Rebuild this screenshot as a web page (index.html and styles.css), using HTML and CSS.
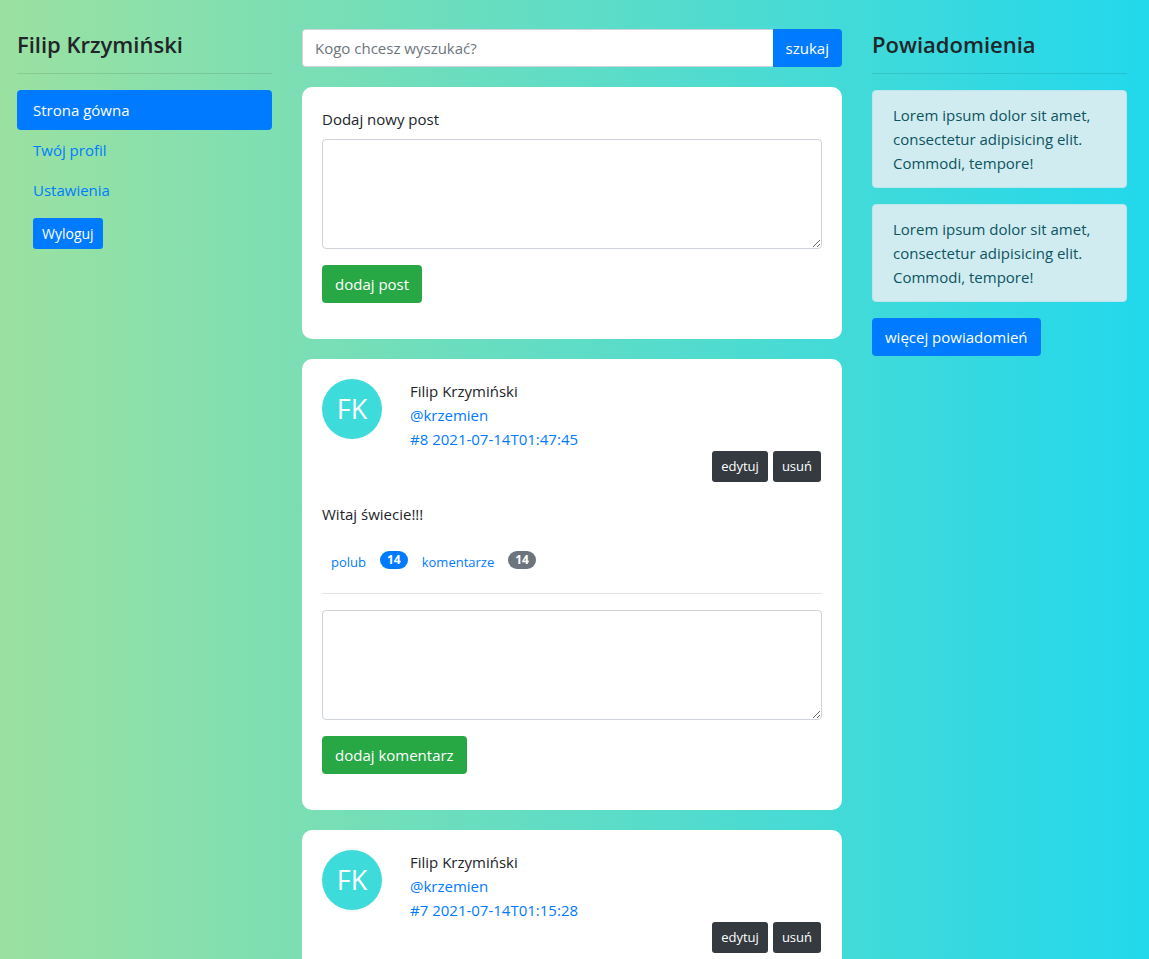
FILE: index.html
```html
<!DOCTYPE html>
<html lang="pl">
<head>
<meta charset="utf-8">
<title>Strona główna</title>
<link rel="stylesheet" href="styles.css">
</head>
<body>
<div class="layout">
  <aside class="sidebar">
    <h1 class="heading">Filip Krzymiński</h1>
    <hr class="rule">
    <nav class="nav">
      <a class="nav-link active" href="#">Strona gówna</a>
      <a class="nav-link" href="#">Twój profil</a>
      <a class="nav-link" href="#">Ustawienia</a>
    </nav>
    <button class="btn btn-sm btn-primary logout" type="button">Wyloguj</button>
  </aside>

  <main class="feed">
    <form class="search">
      <input class="control search-input" type="search" aria-label="Wyszukaj" placeholder="Kogo chcesz wyszukać?">
      <button class="btn btn-primary search-btn" type="button">szukaj</button>
    </form>

    <form class="card">
      <label class="label" for="new-post">Dodaj nowy post</label>
      <textarea class="control area" id="new-post"></textarea>
      <button class="btn btn-success" type="button">dodaj post</button>
    </form>

    <article class="card">
      <header class="post-head">
        <div class="avatar">FK</div>
        <div class="meta">
          <span>Filip Krzymiński</span>
          <a href="#">@krzemien</a>
          <a href="#">#8 2021-07-14T01:47:45</a>
        </div>
      </header>
      <div class="tools">
        <button class="btn btn-sm btn-dark" type="button">edytuj</button>
        <button class="btn btn-sm btn-dark" type="button">usuń</button>
      </div>
      <p class="post-text">Witaj świecie!!!</p>
      <div class="reactions">
        <button class="btn btn-sm btn-link" type="button">polub</button>
        <span class="badge badge-primary">14</span>
        <button class="btn btn-sm btn-link" type="button">komentarze</button>
        <span class="badge badge-secondary">14</span>
      </div>
      <hr class="rule">
      <textarea class="control area" aria-label="Komentarz do posta 8"></textarea>
      <button class="btn btn-success" type="button">dodaj komentarz</button>
    </article>

    <article class="card">
      <header class="post-head">
        <div class="avatar">FK</div>
        <div class="meta">
          <span>Filip Krzymiński</span>
          <a href="#">@krzemien</a>
          <a href="#">#7 2021-07-14T01:15:28</a>
        </div>
      </header>
      <div class="tools">
        <button class="btn btn-sm btn-dark" type="button">edytuj</button>
        <button class="btn btn-sm btn-dark" type="button">usuń</button>
      </div>
    </article>
  </main>

  <aside class="notices">
    <h2 class="heading">Powiadomienia</h2>
    <hr class="rule">
    <div class="alert">Lorem ipsum dolor sit amet, consectetur adipisicing elit. Commodi, tempore!</div>
    <div class="alert">Lorem ipsum dolor sit amet, consectetur adipisicing elit. Commodi, tempore!</div>
    <button class="btn btn-primary" type="button">więcej powiadomień</button>
  </aside>
</div>
</body>
</html>
```
FILE: styles.css
```css
*, *::before, *::after { box-sizing: border-box; }

html { height: 100%; }

body {
  margin: 0;
  height: 100%;
  overflow: hidden;
  padding: 0 22px 0 17px;
  background: linear-gradient(to right, #9be1a0, #22d8ec);
  color: #212529;
  font-family: "Segoe UI", "Open Sans", "Noto Sans", sans-serif;
  font-size: 15px;
  line-height: 24px;
}

a { color: #007bff; text-decoration: none; }

.layout {
  display: grid;
  grid-template-columns: 255fr 540fr 255fr;
  gap: 30px;
  align-items: start;
  max-width: 1110px;
  margin: 0 auto;
  padding-top: 29px;
}

.heading {
  margin: 0;
  font-size: 22px;
  font-weight: 600;
  line-height: 28px;
  padding-top: 1px;
}

.rule {
  width: 100%;
  margin: 15px 0 16px;
  border: 0;
  border-top: 1px solid rgba(0, 0, 0, 0.1);
}

.nav { display: flex; flex-direction: column; }

.nav-link { padding: 8px 16px; border-radius: 4px; }

.nav-link.active { background: #007bff; color: #fff; }

.btn {
  padding: 6px 12px;
  border: 1px solid transparent;
  border-radius: 4px;
  font: inherit;
  color: #fff;
  cursor: pointer;
}

.btn-sm {
  padding: 4px 8px;
  border-radius: 3px;
  font-size: 13px;
  line-height: 21px;
}

.btn-primary { background: #007bff; }
.btn-success { background: #28a745; }
.btn-dark { background: #343a40; }
.btn-link { background: transparent; color: #007bff; }

.logout { margin: 8px 16px; font-size: 14px; }

.feed { display: flex; flex-direction: column; gap: 20px; min-width: 0; }

.control {
  border: 1px solid #ced4da;
  border-radius: 4px;
  background: #fff;
  color: #495057;
  font: inherit;
  padding: 6px 12px;
}

.control::placeholder { color: #6c757d; opacity: 1; }

.search { display: flex; }

.search-input {
  flex: 1;
  min-width: 0;
  height: 38px;
  appearance: none;
  border-right: 0;
  border-radius: 4px 0 0 4px;
}

.search-btn { border-radius: 0 4px 4px 0; }

.card {
  display: flex;
  flex-direction: column;
  align-items: flex-start;
  padding: 20px 20px 36px;
  border-radius: 10px;
  background: #fff;
}

.label { margin-bottom: 8px; }

.area {
  display: block;
  width: 100%;
  height: 110px;
  margin-bottom: 16px;
  resize: vertical;
}

.post-head { display: flex; gap: 28px; }

.avatar {
  display: flex;
  align-items: center;
  justify-content: center;
  width: 60px;
  height: 60px;
  border-radius: 50%;
  background: #3ddbd9;
  color: #fff;
  font-size: 27px;
}

.meta { display: flex; flex-direction: column; }

.tools { display: flex; align-self: flex-end; gap: 5px; margin-right: 1px; }

.post-text { margin: 20px 0; }

.reactions { display: flex; align-items: center; gap: 5px; padding-top: 1px; }

.badge {
  margin-bottom: 5px;
  padding: 3px 7px;
  border-radius: 10px;
  color: #fff;
  font-size: 12px;
  font-weight: 700;
  line-height: 12px;
}

.badge-primary { background: #007bff; }
.badge-secondary { background: #6c757d; }

.notices { min-width: 0; }

.alert {
  margin-bottom: 16px;
  padding: 12px 20px;
  border: 1px solid #bee5eb;
  border-radius: 4px;
  background: #d1ecf1;
  color: #0c5460;
}
```
